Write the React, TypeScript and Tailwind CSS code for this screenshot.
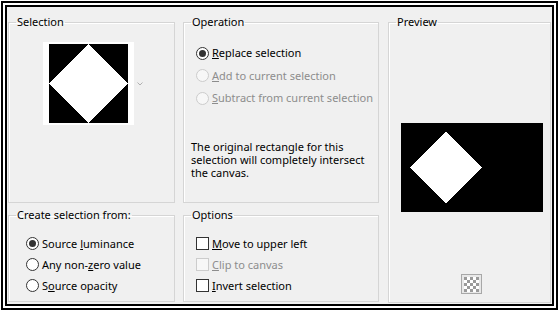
import type { ReactNode } from "react";

function Group({
  title,
  className,
  children,
}: {
  title: string;
  className?: string;
  children?: ReactNode;
}) {
  return (
    <fieldset
      className={`border border-[#d5d5d5] shadow-[inset_1px_1px_0_#ffffff] ${className ?? ""}`}
    >
      <legend className="ml-[7px] px-[1px] text-[11px] leading-[14px] text-black">{title}</legend>
      {children}
    </fieldset>
  );
}

function Radio({
  checked,
  disabled,
  children,
}: {
  checked?: boolean;
  disabled?: boolean;
  children: ReactNode;
}) {
  return (
    <div className={`flex items-center gap-[3px] ${disabled ? "text-[#8d8d8d]" : "text-black"}`}>
      <span
        className={`flex h-[13px] w-[13px] shrink-0 items-center justify-center rounded-full border ${
          disabled ? "border-[#cccccc] bg-[#f7f7f7]" : "border-[#333333] bg-white"
        }`}
      >
        {checked && <span className="h-[7px] w-[7px] rounded-full bg-[#333333]" />}
      </span>
      <span>{children}</span>
    </div>
  );
}

function Check({ disabled, children }: { disabled?: boolean; children: ReactNode }) {
  return (
    <div className={`flex items-center gap-[3px] ${disabled ? "text-[#8d8d8d]" : "text-black"}`}>
      <span
        className={`h-[13px] w-[13px] shrink-0 border ${
          disabled ? "border-[#cccccc] bg-[#f7f7f7]" : "border-[#333333] bg-white"
        }`}
      />
      <span>{children}</span>
    </div>
  );
}

function Diamond({ w, h, cx, cy, r }: { w: number; h: number; cx: number; cy: number; r: number }) {
  return (
    <svg width={w} height={h} viewBox={`0 0 ${w} ${h}`} shapeRendering="crispEdges" className="block">
      <rect width={w} height={h} fill="#000" />
      <polygon points={`${cx},${cy - r} ${cx + r},${cy} ${cx},${cy + r} ${cx - r},${cy}`} fill="#fff" />
    </svg>
  );
}

export default function App() {
  return (
    <div
      className="h-[312px] w-[560px] bg-white pl-[1px] pt-[1px]"
      style={{ fontFamily: '"Noto Sans", "Open Sans", sans-serif' }}
    >
      <div className="h-[309px] w-[557px] border-2 border-black p-[2px]">
        <div className="flex h-full w-full whitespace-nowrap border-2 border-black bg-[#f0f0f0] pl-[1px] pt-[8px] text-[11px] leading-[14px]">
          {/* left column */}
          <div className="flex w-[167px] flex-col gap-[5px]">
            <Group title="Selection" className="h-[188px]">
              <div className="ml-[34px] mt-[13px] flex items-center gap-[3px]">
                <div className="bg-white px-[6px] py-[2px]">
                  <Diamond w={79} h={79} cx={39.5} cy={39.5} r={39.5} />
                </div>
                <svg width="6" height="4" viewBox="0 0 6 4" className="block">
                  <path d="M0.5 0.5 L3 3 L5.5 0.5" fill="none" stroke="#b0b0b0" strokeWidth="1" />
                </svg>
              </div>
            </Group>
            <Group title="Create selection from:" className="h-[94px]">
              <div className="ml-[17px] mt-[11px] flex flex-col">
                <div className="flex h-[21px] items-center">
                  <Radio checked>
                    Source <u>l</u>uminance
                  </Radio>
                </div>
                <div className="flex h-[21px] items-center">
                  <Radio>
                    Any non-<u>z</u>ero value
                  </Radio>
                </div>
                <div className="flex h-[21px] items-center">
                  <Radio>
                    S<u>o</u>urce opacity
                  </Radio>
                </div>
              </div>
            </Group>
          </div>

          {/* middle column */}
          <div className="ml-[8px] flex w-[196px] flex-col gap-[5px]">
            <Group title="Operation" className="h-[188px]">
              <div className="ml-[12px] mt-[13px] flex flex-col">
                <div className="flex h-[22px] items-center">
                  <Radio checked>
                    <u>R</u>eplace selection
                  </Radio>
                </div>
                <div className="flex h-[23px] items-center">
                  <Radio disabled>
                    <u>A</u>dd to current selection
                  </Radio>
                </div>
                <div className="flex h-[22px] items-center">
                  <Radio disabled>
                    <u>S</u>ubtract from current selection
                  </Radio>
                </div>
              </div>
              <p className="ml-[7px] mt-[31px] leading-[13px] text-black">
                The original rectangle for this
                <br />
                selection will completely intersect
                <br />
                the canvas.
              </p>
            </Group>
            <Group title="Options" className="h-[94px]">
              <div className="ml-[12px] mt-[11px] flex flex-col">
                <div className="flex h-[21px] items-center">
                  <Check>
                    <u>M</u>ove to upper left
                  </Check>
                </div>
                <div className="flex h-[21px] items-center">
                  <Check disabled>
                    <u>C</u>lip to canvas
                  </Check>
                </div>
                <div className="flex h-[21px] items-center">
                  <Check>
                    <u>I</u>nvert selection
                  </Check>
                </div>
              </div>
            </Group>
          </div>

          {/* right column */}
          <Group title="Preview" className="ml-[9px] flex h-[288px] w-[163px] flex-col">
            <div className="ml-[12px] mt-[94px]">
              <Diamond w={142} h={89} cx={45} cy={44.5} r={36} />
            </div>
            <div className="mb-[8px] ml-[72px] mt-auto flex h-[20px] w-[21px] items-center justify-center border border-[#a8a8a8] bg-[#e8e8e8]">
              <svg width="15" height="15" viewBox="0 0 15 15" shapeRendering="crispEdges" className="block">
                <rect width="15" height="15" fill="#ffffff" />
                <rect x="0" y="0" width="3" height="3" fill="#9a9a9a" />
                <rect x="6" y="0" width="3" height="3" fill="#9a9a9a" />
                <rect x="12" y="0" width="3" height="3" fill="#9a9a9a" />
                <rect x="3" y="3" width="3" height="3" fill="#9a9a9a" />
                <rect x="9" y="3" width="3" height="3" fill="#9a9a9a" />
                <rect x="0" y="6" width="3" height="3" fill="#9a9a9a" />
                <rect x="6" y="6" width="3" height="3" fill="#9a9a9a" />
                <rect x="12" y="6" width="3" height="3" fill="#9a9a9a" />
                <rect x="3" y="9" width="3" height="3" fill="#9a9a9a" />
                <rect x="9" y="9" width="3" height="3" fill="#9a9a9a" />
                <rect x="0" y="12" width="3" height="3" fill="#9a9a9a" />
                <rect x="6" y="12" width="3" height="3" fill="#9a9a9a" />
                <rect x="12" y="12" width="3" height="3" fill="#9a9a9a" />
              </svg>
            </div>
          </Group>
        </div>
      </div>
    </div>
  );
}
